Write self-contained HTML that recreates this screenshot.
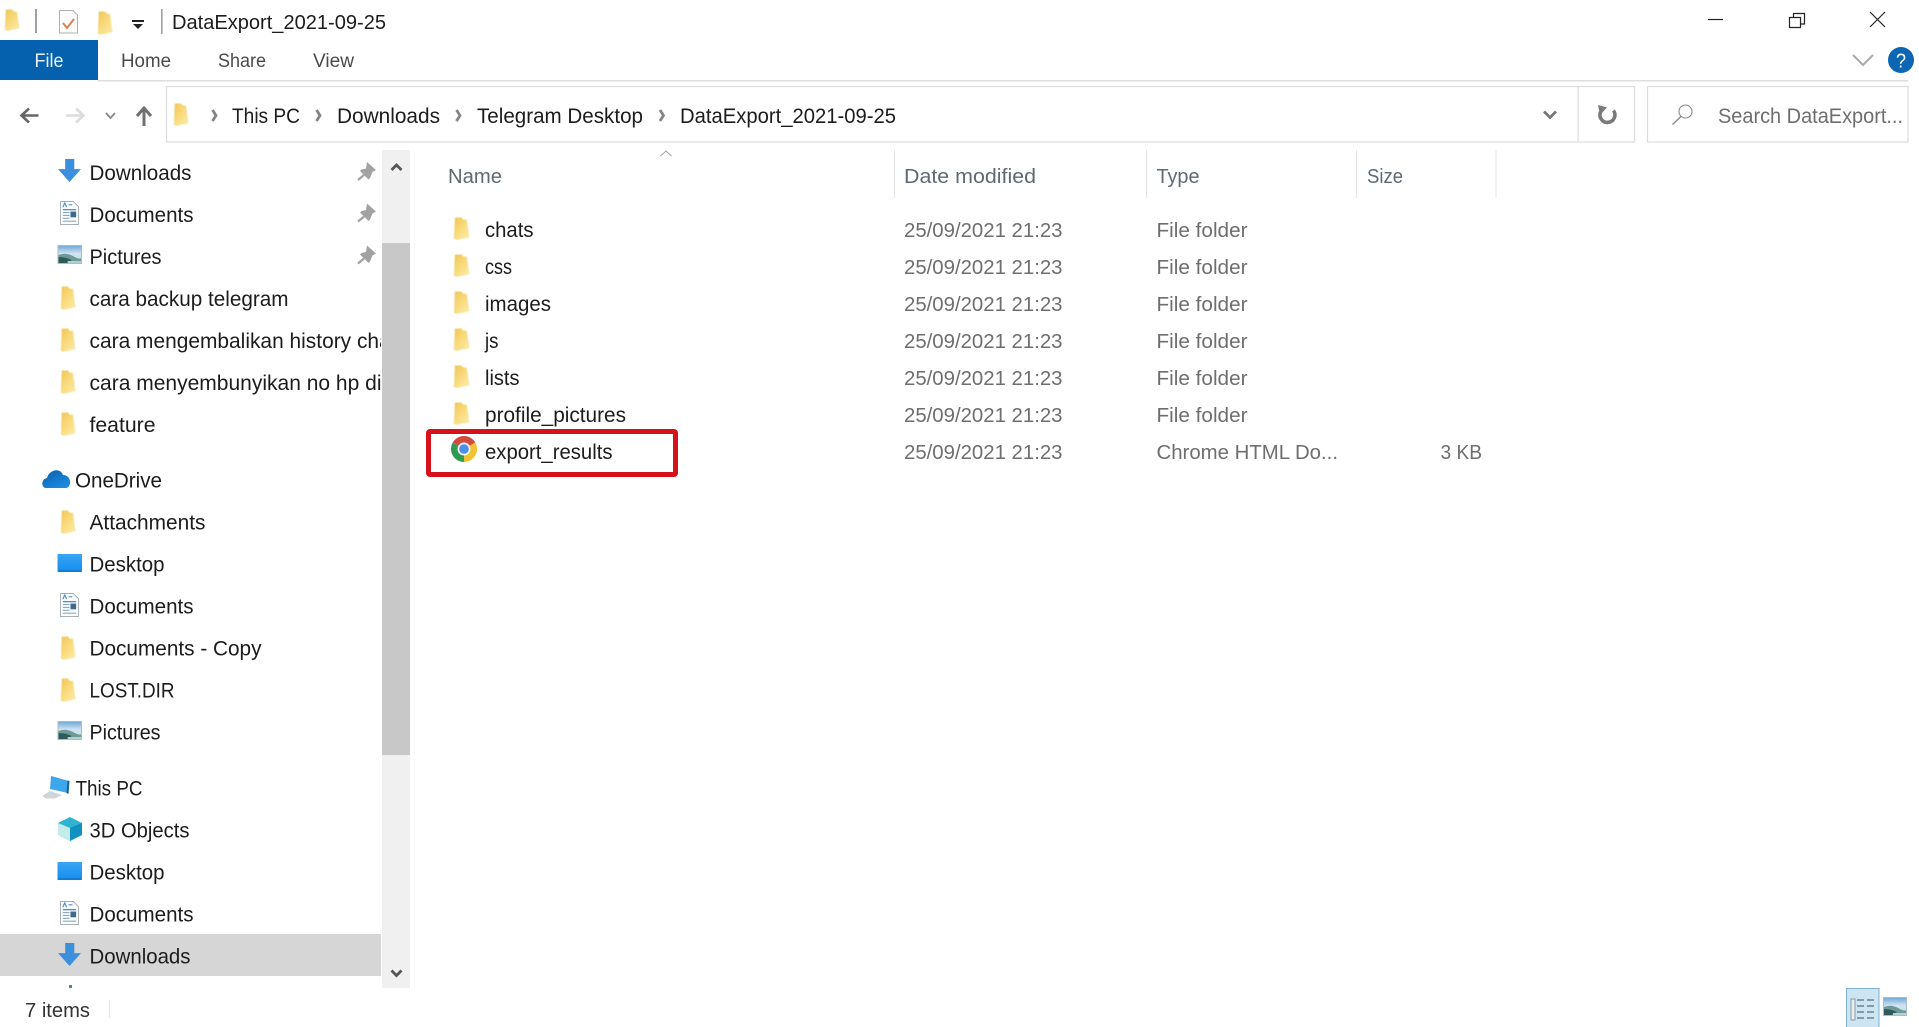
<!DOCTYPE html>
<html lang="en">
<head>
<meta charset="utf-8">
<title>DataExport_2021-09-25</title>
<style>
html,body{margin:0;padding:0;background:#fff;width:1919px;height:1027px;overflow:hidden}
svg{display:block}
text{font-family:"Liberation Sans",Arial,sans-serif;font-size:21px;fill:#1c1c1c}
.t{font-size:19px;fill:#4a4a4a}
.g{fill:#6e6e6e;font-size:20px}
.h{fill:#5f6972;font-size:20.5px}
</style>
</head>
<body>
<svg width="1919" height="1027" viewBox="0 0 1919 1027" xmlns="http://www.w3.org/2000/svg">
<defs>
<linearGradient id="fg" x1="0" y1="0" x2="0.8" y2="1"><stop offset="0" stop-color="#efc656"/><stop offset="0.55" stop-color="#f9db7e"/><stop offset="1" stop-color="#fce9a8"/></linearGradient>
<linearGradient id="dg" x1="0" y1="0" x2="0" y2="1"><stop offset="0" stop-color="#3aa5f3"/><stop offset="1" stop-color="#148df0"/></linearGradient>
<linearGradient id="pg" x1="0" y1="0" x2="0" y2="1"><stop offset="0" stop-color="#6ea6d8"/><stop offset="0.45" stop-color="#cfe4f0"/><stop offset="1" stop-color="#c4dbe2"/></linearGradient>
<linearGradient id="od" x1="0" y1="0" x2="0.7" y2="1"><stop offset="0" stop-color="#0a5fae"/><stop offset="1" stop-color="#1c8ae0"/></linearGradient>
<filter id="soft" x="-20%" y="-20%" width="140%" height="140%"><feGaussianBlur stdDeviation="0.5"/></filter>
<clipPath id="nav"><rect x="0" y="150" width="381" height="838"/></clipPath>
<symbol id="folder" viewBox="0 0 18 22" preserveAspectRatio="none" overflow="visible"><path d="M2 0.5L9 0.5L11 2.5L14.500 2.500L17.500 19.500L4 21.800L1 21Z" fill="url(#fg)" filter="url(#soft)"/></symbol>
<symbol id="arrow" viewBox="0 0 24 24" preserveAspectRatio="none"><path d="M7.500 0H17V10.500H24L12 24L0 10.500H7.500Z" fill="#3b8fdc"/></symbol>
<symbol id="doc" viewBox="0 0 20 25" preserveAspectRatio="none"><path d="M0.5 0.5H14L19.5 6V24.5H0.5Z" fill="#fbfdfe" stroke="#a9b0b5"/><path d="M3 6.500L5 2L7 6.500M9 4H13" fill="none" stroke="#4f8fc6" stroke-width="1.200"/><path d="M3 9H17" stroke="#4f8fc6" stroke-width="1.400"/><path d="M3 12H10M3 15H10M3 18H10M3 21H17" stroke="#8aa9c0" stroke-width="1.200"/><rect x="11" y="11" width="6" height="6" fill="#3f6a8c"/></symbol>
<symbol id="pic" viewBox="0 0 24 19" preserveAspectRatio="none"><rect x="0.5" y="0.5" width="23" height="18" fill="url(#pg)" stroke="#a8bdcc"/><path d="M1 10Q8 7 15 11T23 13V18H1Z" fill="#6d9a95"/><path d="M1 12Q8 12 14 15L9 18H1Z" fill="#2f5a5c"/><path d="M10 16H23V18H10Z" fill="#b6cfd2"/></symbol>
<symbol id="desk" viewBox="0 0 25 18" preserveAspectRatio="none"><rect width="25" height="18" rx="0.5" fill="url(#dg)"/><path d="M1 17H24" stroke="#0b6db8" stroke-width="1"/></symbol>
<g id="pinshape"><path d="M367 162L376 170L372.500 172L370 178L368.500 179.500L360 171L361.500 169.500L366 168.500Z" fill="#a2a2a2"/><path d="M364 175L358 180" stroke="#a2a2a2" stroke-width="2.200"/></g>
</defs>

<!-- Title bar -->
<use href="#folder" x="4" y="9" width="16" height="22"/>
<rect x="35" y="9" width="2" height="24" fill="#a0a0a0"/>
<path d="M59.5 10.500H73L77.5 15V33H59.5Z" fill="#fbfbfb" stroke="#b0b0b0"/>
<path d="M63 23L67 28L74 19" fill="none" stroke="#d98256" stroke-width="2"/>
<use href="#folder" x="97" y="11" width="16" height="24"/>
<rect x="132" y="20" width="12" height="2" fill="#222"/><path d="M133 24H143L138 29Z" fill="#222"/>
<rect x="161" y="9" width="1.600" height="25" fill="#a0a0a0"/>
<text x="172" y="29" textLength="214" lengthAdjust="spacingAndGlyphs" style="font-size:20px">DataExport_2021-09-25</text>

<path d="M1708 19.500H1723" stroke="#222" stroke-width="1.200"/>
<path d="M1789.500 17.500H1800.500V27.500H1789.500Z M1793.500 17.500V13.500H1804.500V24H1800.500" fill="none" stroke="#222" stroke-width="1.200"/>
<path d="M1870 12L1885 27M1885 12L1870 27" stroke="#222" stroke-width="1.200"/>

<!-- Ribbon tabs -->
<rect x="0" y="40" width="98" height="40" fill="#0561ae"/>
<text x="34.500" y="67" textLength="29" lengthAdjust="spacingAndGlyphs" style="font-size:19px;fill:#e8f1f8">File</text>
<text class="t" x="121" y="67" textLength="50" lengthAdjust="spacingAndGlyphs">Home</text>
<text class="t" x="218" y="67" textLength="48" lengthAdjust="spacingAndGlyphs">Share</text>
<text class="t" x="313" y="67" textLength="41" lengthAdjust="spacingAndGlyphs">View</text>
<rect x="98" y="80" width="1810" height="1.500" fill="#dedede"/>
<path d="M1853 55L1863 65L1873 55" fill="none" stroke="#a9a9a9" stroke-width="2"/>
<circle cx="1901" cy="60" r="13" fill="#0d66b3"/>
<text x="1896" y="67.500" textLength="10" lengthAdjust="spacingAndGlyphs" style="font-size:20px;fill:#fff">?</text>

<!-- Nav buttons -->
<path d="M38.500 115.500H23M29 108.500L21.500 115.500L29 122.500" fill="none" stroke="#666" stroke-width="2.600"/>
<path d="M66 115.500H82M76 108.500L83.500 115.500L76 122.500" fill="none" stroke="#dcdcdc" stroke-width="2.600"/>
<path d="M106 113L110.500 118L115 113" fill="none" stroke="#888" stroke-width="1.800"/>
<path d="M144 126V109M137 116L144 108L151 116" fill="none" stroke="#707070" stroke-width="3"/>

<!-- Address bar -->
<rect x="166.500" y="86.500" width="1468" height="55.500" fill="#fff" stroke="#dcdcdc" stroke-width="1.200"/>
<rect x="1577.500" y="86" width="1.200" height="56" fill="#dcdcdc"/>
<use href="#folder" x="173" y="103" width="16" height="23"/>
<path d="M212.500 110L216 115.500L212.500 121M316.500 110L320 115.500L316.500 121M456.500 110L460 115.500L456.500 121M660 110L663.500 115.500L660 121" fill="none" stroke="#858585" stroke-width="2.800"/>
<text x="232" y="123" textLength="68" lengthAdjust="spacingAndGlyphs">This PC</text>
<text x="337" y="123" textLength="103" lengthAdjust="spacingAndGlyphs">Downloads</text>
<text x="477" y="123" textLength="166" lengthAdjust="spacingAndGlyphs">Telegram Desktop</text>
<text x="680" y="123" textLength="216" lengthAdjust="spacingAndGlyphs">DataExport_2021-09-25</text>
<path d="M1544 111.500L1550 117.500L1556 111.500" fill="none" stroke="#777" stroke-width="2.800"/>
<path d="M1613.500 110.500A7.500 7.500 0 1 1 1600.500 112" fill="none" stroke="#7a7a7a" stroke-width="3.600"/><path d="M1598 105L1607 107.500L1600 115Z" fill="#7a7a7a"/>

<!-- Search -->
<rect x="1647.500" y="86.500" width="260.500" height="55.500" fill="#fff" stroke="#dcdcdc" stroke-width="1.200"/>
<circle cx="1685.500" cy="111.500" r="6.500" fill="none" stroke="#8a8a8a" stroke-width="1.100"/>
<path d="M1681 116.500L1672.500 124.500" stroke="#8a8a8a" stroke-width="1.500"/>
<text class="g" x="1718" y="123" textLength="185" lengthAdjust="spacingAndGlyphs" style="font-size:21px">Search DataExport...</text>

<!-- Navigation pane -->
<rect x="0" y="934" width="381" height="42" fill="#d6d6d6"/>
<use href="#arrow" x="58" y="159" width="23" height="23"/>
<use href="#doc" x="60" y="201" width="19" height="24"/>
<use href="#pic" x="57.500" y="245" width="24.500" height="19"/>
<use href="#pinshape"/>
<use href="#pinshape" y="41.500"/>
<use href="#pinshape" y="83.500"/>
<use href="#folder" x="60" y="286" width="16" height="24"/>
<use href="#folder" x="60" y="328" width="16" height="24"/>
<use href="#folder" x="60" y="370" width="16" height="24"/>
<use href="#folder" x="60" y="412" width="16" height="24"/>
<path d="M46 488C41 488 41 479 47 478C49 470 60 467 63 475C69 475 72 482 69 486C68 488 66 488 65 488Z" fill="url(#od)"/>
<use href="#folder" x="60" y="510" width="16" height="24"/>
<use href="#desk" x="57.500" y="554" width="24.500" height="18"/>
<use href="#doc" x="60" y="593" width="19" height="24"/>
<use href="#folder" x="60" y="636" width="16" height="24"/>
<use href="#folder" x="60" y="678" width="16" height="24"/>
<use href="#pic" x="57.500" y="721" width="24.500" height="19"/>
<path d="M51 776L69 781L68 793L50 789Z" fill="#3ea6ea"/><path d="M67.500 780.500L69.500 781L68.500 794L66.500 793Z" fill="#1c5f8c"/>
<path d="M42 796L50 791L62 795L55 798.500H46Z" fill="#d0d5d8"/>
<path d="M70 817L82 823V835L70 841L58 835V823Z" fill="#2eb4d0"/><path d="M58 823L70 828V841L58 835Z" fill="#c4ecec"/><path d="M70 828L82 823V835L70 841Z" fill="#1290bf"/>
<use href="#desk" x="57.500" y="862" width="24.500" height="18"/>
<use href="#doc" x="60" y="901" width="19" height="24"/>
<use href="#arrow" x="58" y="943" width="23" height="23"/>
<rect x="69" y="985" width="3" height="3" fill="#3a8f9a"/>

<g clip-path="url(#nav)">
<text x="89.500" y="180" textLength="102" lengthAdjust="spacingAndGlyphs">Downloads</text>
<text x="89.500" y="222" textLength="104" lengthAdjust="spacingAndGlyphs">Documents</text>
<text x="89.500" y="264" textLength="72" lengthAdjust="spacingAndGlyphs">Pictures</text>
<text x="89.500" y="306" textLength="199" lengthAdjust="spacingAndGlyphs">cara backup telegram</text>
<text x="89.500" y="348" textLength="307" lengthAdjust="spacingAndGlyphs">cara mengembalikan history chat</text>
<text x="89.500" y="390" textLength="292" lengthAdjust="spacingAndGlyphs">cara menyembunyikan no hp di</text>
<text x="89.500" y="432" textLength="66" lengthAdjust="spacingAndGlyphs">feature</text>
<text x="75" y="487.500" textLength="87" lengthAdjust="spacingAndGlyphs">OneDrive</text>
<text x="89.500" y="529.500" textLength="116" lengthAdjust="spacingAndGlyphs">Attachments</text>
<text x="89.500" y="571.500" textLength="75" lengthAdjust="spacingAndGlyphs">Desktop</text>
<text x="89.500" y="613.500" textLength="104" lengthAdjust="spacingAndGlyphs">Documents</text>
<text x="89.500" y="655.500" textLength="172" lengthAdjust="spacingAndGlyphs">Documents - Copy</text>
<text x="89.500" y="697.500" textLength="85" lengthAdjust="spacingAndGlyphs">LOST.DIR</text>
<text x="89.500" y="739.500" textLength="71" lengthAdjust="spacingAndGlyphs">Pictures</text>
<text x="75.500" y="795.500" textLength="67" lengthAdjust="spacingAndGlyphs">This PC</text>
<text x="89.500" y="837.500" textLength="100" lengthAdjust="spacingAndGlyphs">3D Objects</text>
<text x="89.500" y="879.500" textLength="75" lengthAdjust="spacingAndGlyphs">Desktop</text>
<text x="89.500" y="921.500" textLength="104" lengthAdjust="spacingAndGlyphs">Documents</text>
<text x="89.500" y="963.500" textLength="101" lengthAdjust="spacingAndGlyphs">Downloads</text>
</g>

<!-- Nav scrollbar -->
<rect x="382" y="150" width="28" height="838" fill="#f0f0f0"/>
<rect x="382" y="243" width="28" height="512" fill="#c8c8c8"/>
<path d="M391.500 170L396.500 165L401.500 170" fill="none" stroke="#555" stroke-width="2.800"/>
<path d="M391.500 970.500L396.500 975.500L401.500 970.500" fill="none" stroke="#555" stroke-width="2.800"/>
<rect x="414" y="150" width="1" height="838" fill="#f7f7f7"/>

<!-- Column headers -->
<path d="M660.500 156L666 151L671.500 156" fill="none" stroke="#a0a0a0" stroke-width="1"/>
<text class="h" x="448" y="183" textLength="54" lengthAdjust="spacingAndGlyphs">Name</text>
<text class="h" x="904" y="183" textLength="132" lengthAdjust="spacingAndGlyphs">Date modified</text>
<text class="h" x="1156.500" y="183" textLength="43" lengthAdjust="spacingAndGlyphs">Type</text>
<text class="h" x="1367" y="183" textLength="36" lengthAdjust="spacingAndGlyphs">Size</text>
<g fill="#e4e4e4">
<rect x="894" y="150" width="1" height="48"/>
<rect x="1146" y="150" width="1" height="48"/>
<rect x="1356" y="150" width="1" height="48"/>
<rect x="1495.500" y="150" width="1" height="48"/>
</g>

<!-- Files -->
<use href="#folder" x="453" y="217" width="17" height="23"/>
<use href="#folder" x="453" y="254" width="17" height="23"/>
<use href="#folder" x="453" y="291" width="17" height="23"/>
<use href="#folder" x="453" y="328" width="17" height="23"/>
<use href="#folder" x="453" y="365" width="17" height="23"/>
<use href="#folder" x="453" y="402" width="17" height="23"/>
<text x="485" y="237" textLength="48.500" lengthAdjust="spacingAndGlyphs">chats</text>
<text x="485" y="274" textLength="27" lengthAdjust="spacingAndGlyphs">css</text>
<text x="485" y="311" textLength="66" lengthAdjust="spacingAndGlyphs">images</text>
<text x="485" y="348" textLength="13.500" lengthAdjust="spacingAndGlyphs">js</text>
<text x="485" y="385" textLength="34.500" lengthAdjust="spacingAndGlyphs">lists</text>
<text x="485" y="422" textLength="141" lengthAdjust="spacingAndGlyphs">profile_pictures</text>
<text x="485" y="459" textLength="127.500" lengthAdjust="spacingAndGlyphs">export_results</text>

<text class="g" x="904" y="237" textLength="158.500" lengthAdjust="spacingAndGlyphs">25/09/2021 21:23</text>
<text class="g" x="904" y="274" textLength="158.500" lengthAdjust="spacingAndGlyphs">25/09/2021 21:23</text>
<text class="g" x="904" y="311" textLength="158.500" lengthAdjust="spacingAndGlyphs">25/09/2021 21:23</text>
<text class="g" x="904" y="348" textLength="158.500" lengthAdjust="spacingAndGlyphs">25/09/2021 21:23</text>
<text class="g" x="904" y="385" textLength="158.500" lengthAdjust="spacingAndGlyphs">25/09/2021 21:23</text>
<text class="g" x="904" y="422" textLength="158.500" lengthAdjust="spacingAndGlyphs">25/09/2021 21:23</text>
<text class="g" x="904" y="459" textLength="158.500" lengthAdjust="spacingAndGlyphs">25/09/2021 21:23</text>

<text class="g" x="1156.500" y="237" textLength="91" lengthAdjust="spacingAndGlyphs">File folder</text>
<text class="g" x="1156.500" y="274" textLength="91" lengthAdjust="spacingAndGlyphs">File folder</text>
<text class="g" x="1156.500" y="311" textLength="91" lengthAdjust="spacingAndGlyphs">File folder</text>
<text class="g" x="1156.500" y="348" textLength="91" lengthAdjust="spacingAndGlyphs">File folder</text>
<text class="g" x="1156.500" y="385" textLength="91" lengthAdjust="spacingAndGlyphs">File folder</text>
<text class="g" x="1156.500" y="422" textLength="91" lengthAdjust="spacingAndGlyphs">File folder</text>
<text class="g" x="1156.500" y="459" textLength="181.500" lengthAdjust="spacingAndGlyphs">Chrome HTML Do...</text>
<text class="g" x="1440.500" y="459" textLength="41.500" lengthAdjust="spacingAndGlyphs">3 KB</text>

<!-- Chrome icon -->
<g transform="translate(464 449)">
<path d="M0 0L-11.260 -6.500A13 13 0 0 1 11.260 -6.500Z" fill="#d24a3e"/>
<path d="M0 0L11.260 -6.500A13 13 0 0 1 0 13Z" fill="#f3c233"/>
<path d="M0 0L0 13A13 13 0 0 1 -11.260 -6.500Z" fill="#2f9a52"/>
<circle r="6.500" fill="#f4f4f4"/><circle r="4.800" fill="#4f8ee6"/>
</g>

<!-- Red highlight -->
<rect x="428.500" y="431.500" width="247" height="43" rx="1.500" fill="none" stroke="#d5121b" stroke-width="5"/>

<!-- Status bar -->
<text x="25" y="1017" textLength="65" lengthAdjust="spacingAndGlyphs" style="font-size:20px;fill:#333">7 items</text>
<rect x="109" y="1000" width="1" height="18" fill="#e6e6e6"/>
<rect x="1846.500" y="988.500" width="32.500" height="39" fill="#cde5f2" stroke="#7fb2d0"/>
<path d="M1857 1000H1864M1867 1000H1874M1857 1006H1864M1867 1006H1874M1857 1012H1864M1867 1012H1874M1857 1018H1864M1867 1018H1874" stroke="#6b8494" stroke-width="1.500"/>
<path d="M1851 999H1855V1020H1851Z" fill="#e8eff3" stroke="#8a9aa4"/>
<use href="#pic" x="1883" y="997" width="24" height="19"/>
</svg>
</body>
</html>
